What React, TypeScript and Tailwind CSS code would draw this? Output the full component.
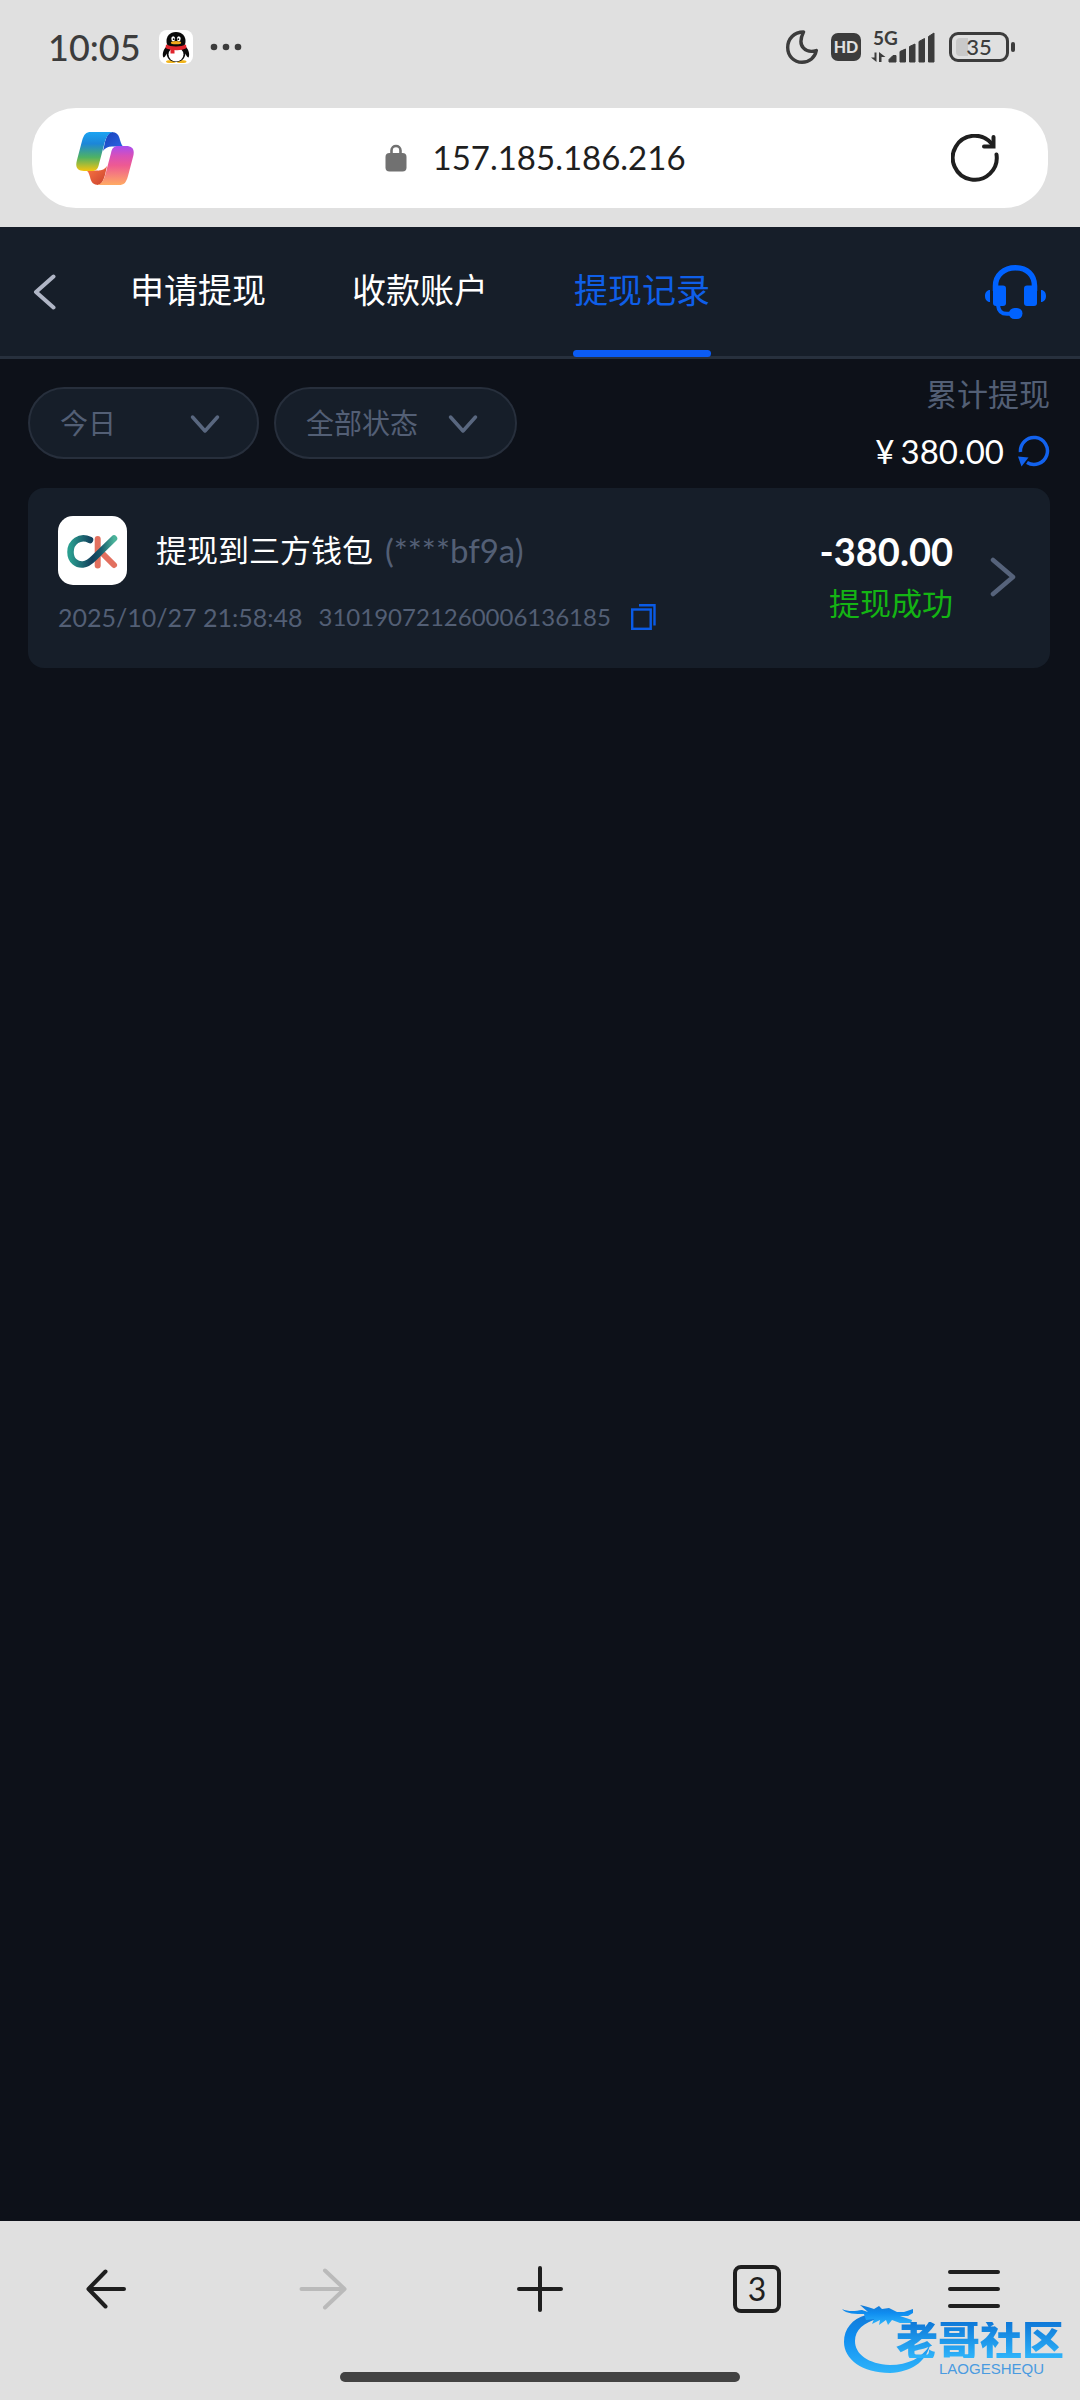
import React, { useState } from 'react';

type Tab = 'apply' | 'accounts' | 'records';

interface WithdrawRecord {
    id: string;
    title: string;
    account: string;
    time: string;
    amount: string;
    status: string;
}

const TABS: { id: Tab; label: string }[] = [
    { id: 'apply', label: '申请提现' },
    { id: 'accounts', label: '收款账户' },
    { id: 'records', label: '提现记录' },
];

const RECORDS: WithdrawRecord[] = [
    {
        id: '310190721260006136185',
        title: '提现到三方钱包',
        account: '(****bf9a)',
        time: '2025/10/27 21:58:48',
        amount: '-380.00',
        status: '提现成功',
    },
];

const QQIcon = () => (
    <svg viewBox="0 0 34 34" className="size-[34px]" aria-hidden="true">
        <rect width="34" height="34" rx="8" fill="#fff" />
        <ellipse cx="12" cy="31.5" rx="5" ry="1.6" fill="#f2b51d" />
        <ellipse cx="22.5" cy="31.5" rx="5" ry="1.6" fill="#f2b51d" />
        <path d="M7 17 C4 20 3 25 4.500 27.500 C6 27 7 25 7.500 23.500 C8 28 11 32 17 32 C23 32 26 28 26.500 23.500 C27 25 28 27 29.500 27.500 C31 25 30 20 27 17Z" fill="#0a0a0a" />
        <ellipse cx="17" cy="24.500" rx="7.500" ry="7" fill="#fff" />
        <path d="M17 2 C10.500 2 7.500 6.500 7.500 11 C7.500 15 9 18 17 18 C25 18 26.500 15 26.500 11 C26.500 6.500 23.500 2 17 2Z" fill="#0a0a0a" />
        <ellipse cx="14.200" cy="8.800" rx="1.900" ry="2.600" fill="#fff" />
        <ellipse cx="19.800" cy="8.800" rx="1.900" ry="2.600" fill="#fff" />
        <circle cx="14.700" cy="9.200" r=".9" fill="#0a0a0a" />
        <circle cx="19.300" cy="9.200" r=".9" fill="#0a0a0a" />
        <ellipse cx="17" cy="12.700" rx="5.200" ry="1.600" fill="#f2a81d" />
        <path d="M7 14.500 C12 17 22 17 27 14.500 L27.500 18 C24 20 19 20.500 15.500 20 L15.500 23.500 L11.500 23.500 L11.500 19.500 C9.500 19.200 8 18.700 6.500 18Z" fill="#e0242c" />
    </svg>
);

const MoonIcon = () => (
    <svg viewBox="0 0 32 34" className="h-[34px] w-8" fill="none" stroke="#3c3c3c" strokeWidth="3.400" strokeLinejoin="round" aria-hidden="true">
        <path d="M17.500 2 C8 2 1.700 9 1.700 17.500 C1.700 26 8 32.300 16 32.300 C23.500 32.300 29 27.500 30.300 20.500 C21 23.500 10 17.500 17.500 2Z" />
    </svg>
);

const SignalIcon = () => (
    <svg viewBox="0 0 64 40" className="h-10 w-16" fill="#3c3c3c" aria-hidden="true">
        <g transform="translate(0 4)">
            <path d="M5.500 21.500 V31 L0 26.500 H3.500 V21.500Z M8 31 V21 L14.500 26 H10.500 V31Z" />
            <path d="M18 31 V28.500 L22 24.500 H25 V31Z M29 31 V20.500 L34.500 18 V31Z M38.500 31 V15.500 L44 13 V31Z M48 31 V10.500 L53.500 7.500 V31Z M57.500 31 V5.500 L63 2 V31Z" stroke="#3c3c3c" strokeWidth="1" strokeLinejoin="round" />
            <text x="2" y="14" fontSize="19" fontWeight="700" fontFamily="Lato, sans-serif">5G</text>
        </g>
    </svg>
);

const CopilotIcon = () => (
    <svg viewBox="0 0 58 53" className="h-[53px] w-[58px]" aria-hidden="true">
        <defs>
            <linearGradient id="cp-a" x1="0" y1="0" x2="0" y2="1">
                <stop offset="0" stopColor="#1ba4f2" />
                <stop offset=".3" stopColor="#1c86d8" />
                <stop offset=".65" stopColor="#4fb263" />
                <stop offset="1" stopColor="#f6c40f" />
            </linearGradient>
            <linearGradient id="cp-b" x1="0" y1="0" x2="0" y2="1">
                <stop offset="0" stopColor="#ffab63" />
                <stop offset=".5" stopColor="#ee5a92" />
                <stop offset=".75" stopColor="#d850b8" />
                <stop offset="1" stopColor="#a84df0" />
            </linearGradient>
            <linearGradient id="cp-c" x1="0" y1="0" x2="1" y2="1">
                <stop offset="0" stopColor="#1a3fb8" />
                <stop offset="1" stopColor="#2a6bea" />
            </linearGradient>
            <linearGradient id="cp-d" x1="0" y1="0" x2="1" y2="1">
                <stop offset="0" stopColor="#c8402e" />
                <stop offset="1" stopColor="#ff7b45" />
            </linearGradient>
        </defs>
        <path d="M35 0 C41 0 43 3 44 8 L45 11 C46 14 47 14.500 49 14.500 H36 C32 14.500 29 16 27 19 L29 10 C31 3 33 0 37 0Z" fill="url(#cp-c)" />
        <path d="M35 0 C41 0 43 3 44 8 L45 11 C46 14 47 14.500 49 14.500 H36 C32 14.500 29 16 27 19 L29 10 C31 3 33 0 37 0Z" fill="url(#cp-d)" transform="rotate(180 29 26.500)" />
        <path d="M15 0 H37 C32 1 30 5 28 13 L23 32 C22 37 20 39 16 39 H8 C1 39 -1 35 1 28 L6 9 C8 2 10 0 15 0Z" fill="url(#cp-a)" />
        <path d="M15 0 H37 C32 1 30 5 28 13 L23 32 C22 37 20 39 16 39 H8 C1 39 -1 35 1 28 L6 9 C8 2 10 0 15 0Z" fill="url(#cp-b)" transform="rotate(180 29 26.500)" />
        <path d="M35 15 H37 C33 17 31 20 29.500 25 L27 33 C26 36 25 37.500 22 38.500 C23.500 37 24 35 25 31 L27.500 22 C29 17 31 15 35 15Z" fill="#fff" />
    </svg>
);

const HeadsetIcon = () => (
    <svg viewBox="0 0 61 54" className="h-[54px] w-[61px]" fill="#0062ff" aria-hidden="true">
        <path d="M10.500 26 V21 C10.500 10 19 2.800 30.500 2.800 C42 2.800 49.500 10 49.500 21 V26" fill="none" stroke="#0062ff" strokeWidth="5.500" />
        <path d="M8 20.500 H18 C20 20.500 21 21.500 21 23.500 V38 C21 40 20 41 18 41 H11 C9 41 8 40 8 38Z" />
        <path d="M52 20.500 H42 C40 20.500 39 21.500 39 23.500 V38 C39 40 40 41 42 41 H49 C51 41 52 40 52 38Z" />
        <path d="M5 25 C2 25 0 27.500 0 31 C0 34.500 2 37 5 37Z M56 25 C59 25 61 27.500 61 31 C61 34.500 59 37 56 37Z" />
        <path d="M13 40 C13.500 46 16 48.700 22 48.700 H27" fill="none" stroke="#0062ff" strokeWidth="4" />
        <rect x="24" y="43" width="13.500" height="11" rx="5.500" />
    </svg>
);

const WalletLogo = () => (
    <svg viewBox="0 0 69 69" className="size-[69px] shrink-0" fill="none" strokeLinecap="round" aria-hidden="true">
        <defs>
            <linearGradient id="ck-c" gradientUnits="userSpaceOnUse" x1="12" y1="24" x2="56" y2="24">
                <stop offset="0" stopColor="#2a9d8f" />
                <stop offset=".5" stopColor="#123f5c" />
                <stop offset=".7" stopColor="#165a6c" />
                <stop offset="1" stopColor="#4bb39a" />
            </linearGradient>
        </defs>
        <rect width="69" height="69" rx="15" fill="#fff" />
        <path d="M39.700 23 V49.500" stroke="#e2705f" strokeWidth="6" />
        <path d="M45 38 L56 49" stroke="#e2705f" strokeWidth="6" />
        <path d="M32 24 C22 19 12.500 26 12.500 36 C12.500 45 19 49 25 48.500 C30 48 33 45 36 42 L56 22.500" stroke="url(#ck-c)" strokeWidth="6.500" strokeLinejoin="round" />
    </svg>
);

const DragonMark = () => (
    <svg viewBox="0 0 90 70" className="h-[70px] w-[90px]" aria-hidden="true">
        <defs>
            <linearGradient id="dragon" x1="0" y1="0" x2="0" y2="1">
                <stop offset="0" stopColor="#1478d4" />
                <stop offset=".4" stopColor="#0f8df0" />
                <stop offset="1" stopColor="#2fb4fa" />
            </linearGradient>
        </defs>
        <g fill="url(#dragon)">
            <path d="M24 11 C10 15 2 25 2 38 C2 55 20 69 48 69 C69 68 84 58 88 41 C80 54 66 61 48 61 C26 60 13 50 13 37 C13 26 22 18 36 15 L38 8 L24 8Z" />
            <path d="M0 5 C6 8 14 7 20 6 L26 8 L18 1 C24 2 28 4 32 5 L37 2 L40 5 L47 4 L55 8 L62 8 L71 5 L71 9 L66 12 L58 12 L70 16 L69 19 L58 19 L50 16 L46 21 L44 16 L37 21 L38 16 L30 20 L32 15 L24 16 L22 10 C14 10 4 10 0 5Z" />
        </g>
    </svg>
);

interface FilterSelectProps {
    label: string;
    options: string[];
    className: string;
}

const FilterSelect: React.FC<FilterSelectProps> = ({ label, options, className }) => (
    <div className={`relative h-[72px] ${className}`}>
        <select
            aria-label={label}
            className="h-full w-full appearance-none rounded-full border-2 border-[#272f3c] bg-[#161e29] pl-[30px] text-[28px] text-[#535f75] outline-none"
        >
            {options.map(option => <option key={option}>{option}</option>)}
        </select>
        <svg viewBox="0 0 30 20" className="pointer-events-none absolute top-[27px] right-[39px] h-5 w-[30px]" fill="none" stroke="#59677f" strokeWidth="3.500" strokeLinecap="round" strokeLinejoin="round" aria-hidden="true">
            <path d="M2.500 3 L15 17 L27.500 3" />
        </svg>
    </div>
);

const StatusBar = () => (
    <div className="flex h-[94px] items-center justify-between pr-[65px] pl-12 text-[#3c3c3c]">
        <div className="flex items-center">
            <span className="w-[111px] text-[36px] font-medium">10:05</span>
            <QQIcon />
            <svg viewBox="0 0 32 8" className="ml-[17px] h-2 w-8" fill="#3c3c3c" aria-hidden="true">
                <circle cx="4" cy="4" r="3.300" />
                <circle cx="16" cy="4" r="3.300" />
                <circle cx="28" cy="4" r="3.300" />
            </svg>
        </div>
        <div className="flex items-center">
            <MoonIcon />
            <span className="mr-[10px] ml-[13px] flex h-7 w-[30px] items-center justify-center rounded-[7px] bg-[#3c3c3c] text-[16px] font-black text-[#e0e0e0]">HD</span>
            <SignalIcon />
            <span className="relative ml-[14px] flex h-[30px] w-[60px] items-center justify-center rounded-[9px] border-3 border-[#3c3c3c] text-[22px] leading-none font-medium">
                <span className="absolute inset-y-[3px] left-1 w-3 rounded-l-[4px] bg-[#c9c9c9]" />
                <span className="relative">35</span>
            </span>
            <span className="ml-[2px] h-[10px] w-1 rounded-sm bg-[#3c3c3c]" />
        </div>
    </div>
);

const AddressBar = () => (
    <div className="px-8 pt-[14px] pb-[19px]">
        <div className="flex h-[100px] items-center rounded-[44px] bg-white pr-[49px] pl-11">
            <button type="button" aria-label="Copilot"><CopilotIcon /></button>
            <div className="flex flex-1 items-center justify-center">
                <svg viewBox="0 0 22 28" className="mr-[26px] h-7 w-[22px]" aria-hidden="true">
                    <path d="M6.500 10 V6.500 C6.500 0.500 15.500 0.500 15.500 6.500 V10" fill="none" stroke="#717171" strokeWidth="2.600" />
                    <rect x=".5" y="9" width="21" height="18.500" rx="4" fill="#717171" />
                </svg>
                <input aria-label="网址" readOnly defaultValue="157.185.186.216" className="w-[256px] bg-transparent text-[33px] text-[#1f1f1f] outline-none" />
            </div>
            <button type="button" aria-label="刷新" className="flex w-[60px] justify-end">
                <svg viewBox="0 0 48 48" className="size-12" fill="none" stroke="#1f1f1f" strokeWidth="4" strokeLinecap="round" aria-hidden="true">
                    <path d="M45.500 20.500 A22 22 0 1 1 40.500 9.500 L42 12" />
                    <path d="M42.500 3 V12.500 H33" strokeLinejoin="miter" />
                </svg>
            </button>
        </div>
    </div>
);

const RecordCard: React.FC<{ record: WithdrawRecord }> = ({ record }) => (
    <li className="flex h-[180px] items-center rounded-[16px] bg-[#161e29] pr-[34px] pb-[3px] pl-[30px]">
        <div className="flex-1">
            <div className="flex items-center text-[31px]">
                <WalletLogo />
                <span className="ml-[29px] text-white">{record.title}</span>
                <span className="ml-3 text-[33px] text-[#535f75]">{record.account}</span>
            </div>
            <div className="mt-3 flex items-center text-[25px] leading-[40px] text-[#535f75]">
                <span>{record.time}</span>
                <span className="ml-4 text-[24px]">{record.id}</span>
                <button type="button" aria-label="复制" className="ml-5">
                    <svg viewBox="0 0 25 26" className="h-[26px] w-[25px]" fill="none" stroke="#0a5be6" strokeWidth="2.400" aria-hidden="true">
                        <rect x="1.200" y="5.500" width="18.500" height="19.300" />
                        <path d="M8 1.300 H23.500 V21.500" />
                    </svg>
                </button>
            </div>
        </div>
        <div className="text-right">
            <p className="text-[38px] leading-[52px] font-bold text-white">{record.amount}</p>
            <p className="text-[31px] leading-[52px] text-[#14b414]">{record.status}</p>
        </div>
        <svg viewBox="0 0 26 40" className="ml-[37px] h-10 w-[26px]" fill="none" stroke="#56637b" strokeWidth="4.500" strokeLinecap="round" strokeLinejoin="round" aria-hidden="true">
            <path d="M3 3 L23 20 L3 37" />
        </svg>
    </li>
);

const BrowserToolbar = () => (
    <footer className="relative flex h-[179px] flex-col items-center bg-[#e0e0e0] text-[#1f1f1f]">
        <nav className="mt-10 flex w-full items-center justify-between px-[78px]">
            <button type="button" aria-label="后退" className="flex size-14 items-center justify-center">
                <svg viewBox="0 0 40 40" className="size-10" fill="none" stroke="currentColor" strokeWidth="4" strokeLinecap="round" strokeLinejoin="round" aria-hidden="true">
                    <path d="M38 20 H3 M19.500 2.500 L2.500 20 L19.500 37.500" />
                </svg>
            </button>
            <button type="button" aria-label="前进" disabled className="flex size-14 items-center justify-center text-[#bababa]">
                <svg viewBox="0 0 48 42" className="h-[42px] w-12" fill="none" stroke="currentColor" strokeWidth="4" strokeLinecap="round" strokeLinejoin="round" aria-hidden="true">
                    <path d="M2.500 21 H45 M26 2.500 L45.500 21 L26 39.500" />
                </svg>
            </button>
            <button type="button" aria-label="新建标签页" className="flex size-14 items-center justify-center">
                <svg viewBox="0 0 48 48" className="size-12" stroke="currentColor" strokeWidth="4" strokeLinecap="round" aria-hidden="true">
                    <path d="M24 3 V45 M3 24 H45" />
                </svg>
            </button>
            <button type="button" aria-label="标签页" className="flex size-14 items-center justify-center">
                <span className="flex size-12 items-center justify-center rounded-[8px] border-4 border-[#1f1f1f] text-[32px] leading-none">3</span>
            </button>
            <button type="button" aria-label="菜单" className="flex size-14 items-center justify-center">
                <svg viewBox="0 0 54 40" className="h-10 w-[54px]" stroke="currentColor" strokeWidth="4" strokeLinecap="round" aria-hidden="true">
                    <path d="M3 3 H51 M3 20 H51 M3 37 H51" />
                </svg>
            </button>
        </nav>
        <div className="mt-[55px] h-[10px] w-[37%] rounded-full bg-[#424242]" />
        {/* community badge floats over the toolbar */}
        <div className="pointer-events-none absolute right-4 bottom-6 h-[72px] w-[222px]">
            <div className="absolute top-0 left-0"><DragonMark /></div>
            <div className="absolute top-[18px] right-0 bg-linear-to-b from-[#0f78d8] to-[#2fb4fa] bg-clip-text text-[42px] leading-[36px] font-black text-transparent">老哥社区</div>
            <div className="absolute right-5 bottom-0 font-['Liberation_Sans'] text-[15px] leading-[14px] text-[#4a9be0]">LAOGESHEQU</div>
        </div>
    </footer>
);

const App: React.FC = () => {
    const [activeTab, setActiveTab] = useState<Tab>('records');

    return (
        <div className="flex min-h-screen flex-col bg-[#0d1119] font-[Lato,'Noto_Sans_CJK_SC',sans-serif]">
            <div className="bg-[#e0e0e0]">
                <StatusBar />
                <AddressBar />
            </div>

            <header className="flex h-[132px] items-center border-b-3 border-[#27303d] bg-[#161e29] pr-[34px] pl-[33px]">
                <button type="button" aria-label="返回" className="mr-[73px]">
                    <svg viewBox="0 0 24 36" className="h-9 w-6" fill="none" stroke="#b0b6c6" strokeWidth="4" strokeLinecap="round" strokeLinejoin="round" aria-hidden="true">
                        <path d="M20.500 2.500 L3 18 L20.500 33.500" />
                    </svg>
                </button>
                <div role="tablist" className="flex flex-1 gap-[86px] self-stretch">
                    {TABS.map(tab => (
                        <button
                            key={tab.id}
                            type="button"
                            role="tab"
                            aria-selected={activeTab === tab.id}
                            onClick={() => setActiveTab(tab.id)}
                            className={`relative pb-1 text-[34px] ${activeTab === tab.id ? 'text-[#0f5fe8]' : 'text-white'}`}
                        >
                            {tab.label}
                            {activeTab === tab.id && (
                                <span className="absolute -inset-x-px -bottom-px h-[7px] rounded-full bg-[#0b5cf5]" />
                            )}
                        </button>
                    ))}
                </div>
                <button type="button" aria-label="客服"><HeadsetIcon /></button>
            </header>

            <main className="flex-1 pr-[30px] pl-7">
                <div className="flex h-[129px] items-center pb-[2px]">
                    <FilterSelect label="日期" options={['今日', '昨日', '近7日']} className="w-[231px]" />
                    <FilterSelect label="状态" options={['全部状态', '提现成功', '提现失败']} className="ml-[15px] w-[243px]" />
                    <div className="mb-[2px] ml-auto text-right">
                        <p className="text-[31px] leading-[58px] text-[#535f75]">累计提现</p>
                        <div className="flex items-center justify-end text-[33px] leading-[56px] text-white">
                            <span className="mr-[6px]">¥</span>
                            <span>380.00</span>
                            <button type="button" aria-label="刷新金额" className="ml-[14px]">
                                <svg viewBox="0 0 32 32" className="size-8" aria-hidden="true">
                                    <path d="M2.500 17 A13.500 13.500 0 1 1 9 27.500" fill="none" stroke="#1262ee" strokeWidth="3.500" />
                                    <path d="M0 21.500 L10.500 22.500 L3.500 31.500Z" fill="#1262ee" />
                                </svg>
                            </button>
                        </div>
                    </div>
                </div>
                <ul>
                    {RECORDS.map(record => <RecordCard key={record.id} record={record} />)}
                </ul>
            </main>

            <BrowserToolbar />
        </div>
    );
};

export default App;
